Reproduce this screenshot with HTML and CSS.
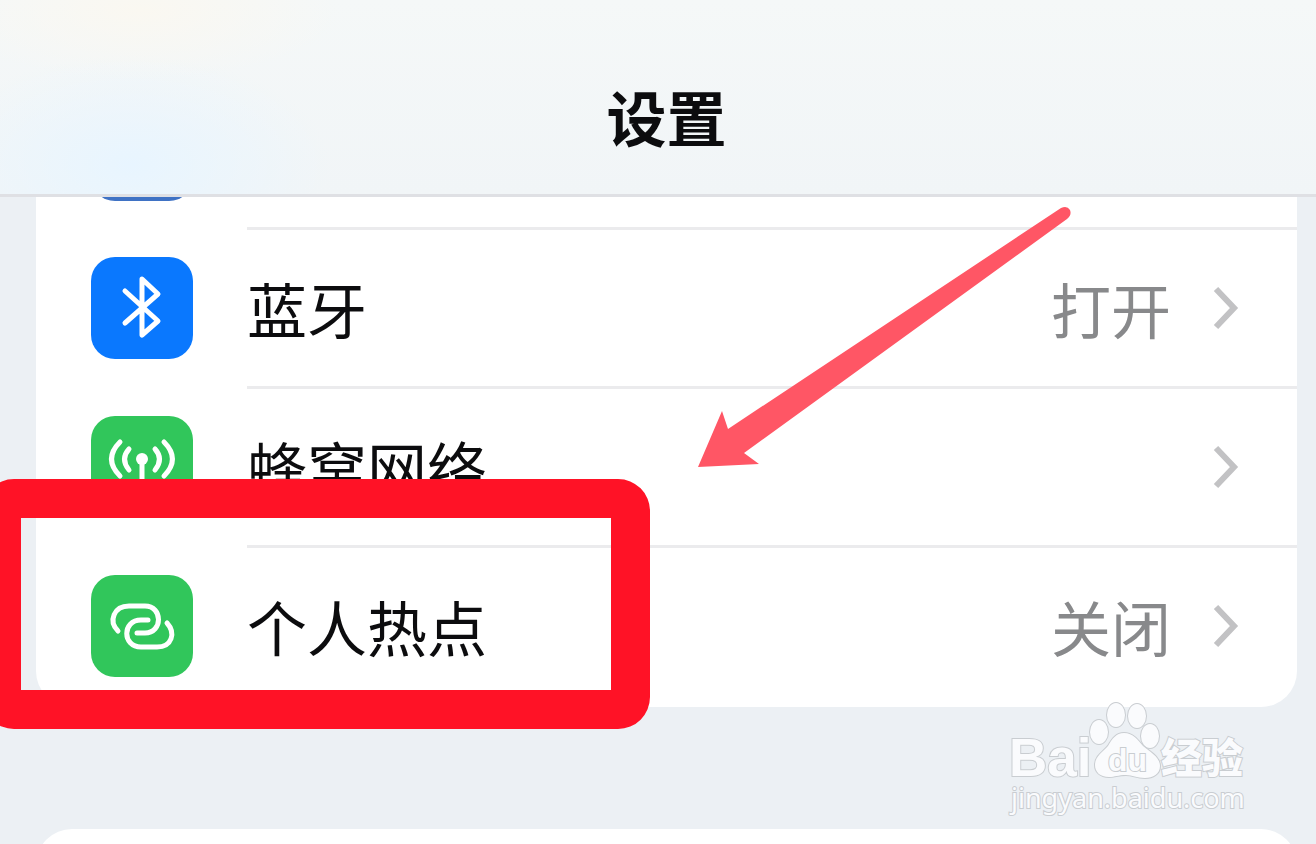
FILE: index.html
```html
<!DOCTYPE html>
<html lang="zh-CN">
<head>
  <meta charset="UTF-8">
  <meta name="viewport" content="width=device-width, initial-scale=1">
  <title>设置</title>
  <link rel="stylesheet" href="styles.css">
</head>
<body>
  <div class="page">
    <header class="header">
      <h1>设置</h1>
    </header>

    <main class="content">
      <nav class="card">
        <div class="row row-hidden">
          <span class="icon blue"></span>
          <div class="row-body"></div>
        </div>

        <a class="row" href="#bluetooth">
          <span class="icon blue">
            <svg viewBox="0 0 102 102" fill="none" stroke="#fff" stroke-width="5" stroke-linejoin="round" stroke-linecap="round">
              <path d="M34 34 L67 64 L51 78 V22 L67 37 L34 66"/>
            </svg>
          </span>
          <div class="row-body">
            <span class="label">蓝牙</span>
            <span class="value">打开</span>
            <svg class="chevron" viewBox="0 0 26 46"><path d="M3 4 L21 23 L3 42"/></svg>
          </div>
        </a>

        <a class="row" href="#cellular">
          <span class="icon green">
            <svg viewBox="0 0 102 102" fill="none" stroke="#fff" stroke-width="5" stroke-linecap="round">
              <circle cx="51" cy="43" r="6" fill="#fff" stroke="none"/>
              <path d="M51 46 V82"/>
              <path d="M38 33 Q29 43 38 54"/>
              <path d="M64 33 Q73 43 64 54"/>
              <path d="M29 26 Q12 43 29 60"/>
              <path d="M73 26 Q90 43 73 60"/>
            </svg>
          </span>
          <div class="row-body">
            <span class="label">蜂窝网络</span>
            <svg class="chevron" viewBox="0 0 26 46"><path d="M3 4 L21 23 L3 42"/></svg>
          </div>
        </a>

        <a class="row" href="#hotspot">
          <span class="icon green">
            <svg viewBox="0 0 102 102" fill="none" stroke="#fff" stroke-width="5" stroke-linecap="round">
              <path d="M27 56 C17 46 23 31 38 31 H54 C72 31 72 58 54 58 H46"/>
              <path d="M57 45 H50 C31 45 31 72 50 72 H66 C81 72 85 58 76 48"/>
            </svg>
          </span>
          <div class="row-body">
            <span class="label">个人热点</span>
            <span class="value">关闭</span>
            <svg class="chevron" viewBox="0 0 26 46"><path d="M3 4 L21 23 L3 42"/></svg>
          </div>
        </a>
      </nav>

      <div class="card">
        <div class="row"></div>
      </div>

      <!-- marks over the list -->
      <div class="highlight"></div>
      <svg class="arrow" viewBox="0 0 380 264">
        <path d="M2 263 L26 207 L32 225 L365 4 Q371 1 374 6 Q376 11 371 15 L48 249 L63 260 Z"/>
      </svg>

      <svg class="watermark" viewBox="0 0 260 130">
        <text class="wm-bai" x="5" y="81">Bai</text>
        <g class="wm-paw">
          <ellipse cx="95" cy="37" rx="9" ry="12"/>
          <ellipse cx="112" cy="20" rx="9" ry="12"/>
          <ellipse cx="133" cy="21" rx="9" ry="12"/>
          <ellipse cx="146" cy="41" rx="9" ry="12"/>
          <path d="M120 38 C129 38 134 45 139 51 C146 57 156 62 156 71 C156 79 149 83 141 83 C132 83 129 80 122 80 C114 80 111 82 105 82 C96 82 91 77 91 70 C91 61 99 57 104 51 C108 44 112 38 120 38 Z"/>
        </g>
        <text class="wm-du" x="104" y="76">du</text>
        <text class="wm-cn" x="157" y="78">经验</text>
        <text class="wm-url" x="7" y="113">jingyan.baidu.com</text>
      </svg>
    </main>
  </div>
</body>
</html>
```

FILE: styles.css
```css
* {
  box-sizing: border-box;
}

body {
  margin: 0;
  font-family: "Noto Sans CJK SC", sans-serif;
  color: #0c0c0e;
  background: #ecf0f4;
}

.page {
  height: 100vh;
  overflow: hidden;
}

.header {
  display: flex;
  justify-content: center;
  height: 197px;
  padding: 74px 19px 0 36px;
  border-bottom: 3px solid #dfe0e4;
  background:
    radial-gradient(ellipse 200px 110px at 130px 165px, #e8f5ff, transparent),
    radial-gradient(ellipse 200px 70px at 140px 10px, #faf8f1, transparent),
    linear-gradient(#f5f8f8, #f1f5f7);
}

h1 {
  margin: 0;
  font-size: 60px;
  line-height: 84px;
  font-weight: 700;
}

.content {
  position: relative;
  padding: 0 19px 0 36px;
}

.card {
  margin-bottom: 122px;
  border-radius: 36px;
  background: #fff;
  overflow: hidden;
}

.card:first-child {
  border-radius: 0 0 36px 36px;
}

.row {
  display: flex;
  align-items: center;
  gap: 54px;
  height: 159px;
  padding-left: 55px;
  color: inherit;
  text-decoration: none;
}

.row-hidden {
  align-items: flex-end;
  height: 33px;
  overflow: hidden;
}

.icon {
  flex: none;
  width: 102px;
  height: 102px;
  margin-bottom: 4px;
  border-radius: 24px;
}

.row-hidden .icon {
  margin-bottom: 29px;
}

.icon svg {
  display: block;
}

.blue {
  background: #0a78fe;
}

.green {
  background: #31c65b;
}

.row-hidden .blue {
  background: #3f72c4;
}

.row-body {
  flex: 1;
  display: flex;
  align-items: center;
  height: 100%;
  padding-right: 58px;
  border-bottom: 3px solid #ebebed;
}

.row:last-child .row-body {
  border-bottom-color: transparent;
}

.label,
.value {
  font-size: 60px;
  line-height: 88px;
}

.label {
  flex: 1;
}

.value {
  margin-right: 42px;
  color: #88898b;
}

.chevron {
  width: 26px;
  height: 46px;
  fill: none;
  stroke: #c2c2c4;
  stroke-width: 6;
}

.highlight {
  position: absolute;
  top: 282px;
  left: -18px;
  width: 668px;
  height: 250px;
  border: 39px solid #ff1226;
  border-radius: 32px;
}

.arrow {
  position: absolute;
  top: 7px;
  left: 696px;
  width: 380px;
  height: 264px;
  fill: #ff5665;
}

.watermark {
  position: absolute;
  top: 498px;
  right: 52px;
  width: 260px;
  height: 130px;
  fill: #fafbfd;
  stroke: #c9cdd1;
  stroke-width: 2;
  paint-order: stroke;
}

.wm-bai {
  font: 700 53px "Liberation Sans", sans-serif;
}

.wm-du {
  font: 700 32px "Liberation Sans", sans-serif;
}

.wm-cn {
  font: 900 41px "Noto Sans CJK SC", sans-serif;
}

.wm-url {
  font: 400 27px "Noto Sans", sans-serif;
}
```
